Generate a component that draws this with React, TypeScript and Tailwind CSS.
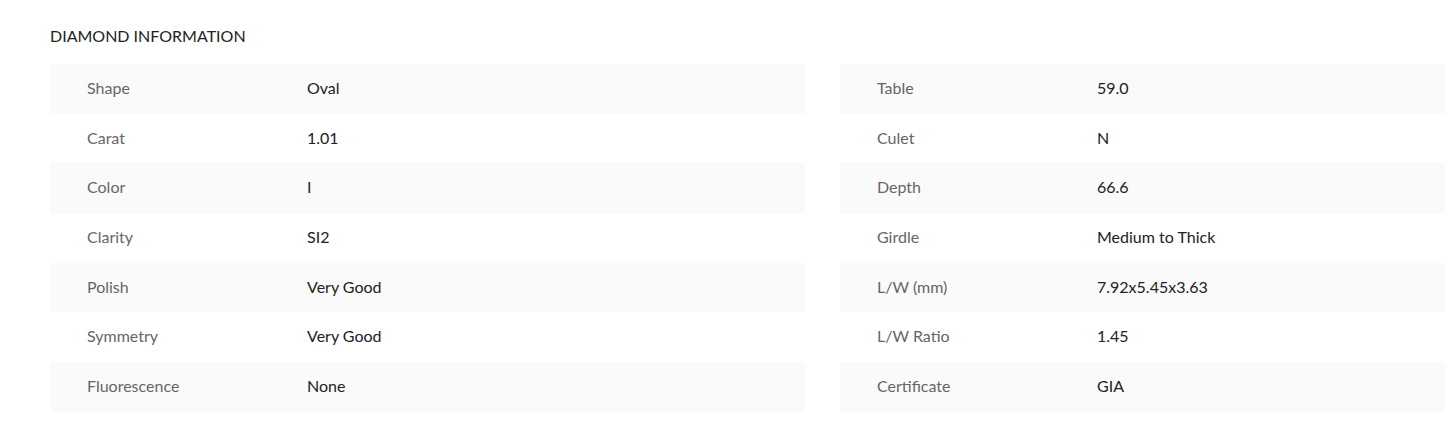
import React from "react";

const left: [string, string][] = [
  ["Shape", "Oval"],
  ["Carat", "1.01"],
  ["Color", "I"],
  ["Clarity", "SI2"],
  ["Polish", "Very Good"],
  ["Symmetry", "Very Good"],
  ["Fluorescence", "None"],
];
const right: [string, string][] = [
  ["Table", "59.0"],
  ["Culet", "N"],
  ["Depth", "66.6"],
  ["Girdle", "Medium to Thick"],
  ["L/W (mm)", "7.92x5.45x3.63"],
  ["L/W Ratio", "1.45"],
  ["Certificate", "GIA"],
];

function Table({ rows }: { rows: [string, string][] }) {
  return (
    <div className="flex w-[755px] shrink-0 flex-col">
      {rows.map(([k, v], i) => (
        <div
          key={k}
          className={`flex h-[49.7px] items-center pb-[2px] pl-[37px] ${i % 2 === 0 ? "bg-[#fafafa]" : "bg-white"}`}
        >
          <div className="w-[220px] text-[#666666]">{k}</div>
          <div className="text-[#222222]">{v}</div>
        </div>
      ))}
    </div>
  );
}

export default function App() {
  return (
    <div
      className="h-[424px] w-[1445px] overflow-hidden bg-white pl-[50px] pt-[25px] text-[16px]"
      style={{ fontFamily: "Lato, 'Noto Sans', sans-serif" }}
    >
      <div className="h-[39px] leading-[22px] text-[#222222]">DIAMOND INFORMATION</div>
      <div className="flex gap-[35px]">
        <Table rows={left} />
        <Table rows={right} />
      </div>
    </div>
  );
}
